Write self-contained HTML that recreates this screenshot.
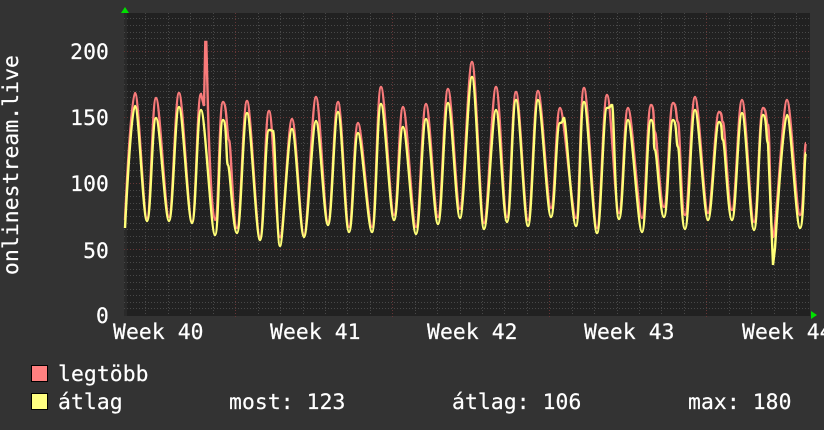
<!DOCTYPE html>
<html><head><meta charset="utf-8"><style>
html,body{margin:0;padding:0;background:#333;width:824px;height:430px;overflow:hidden}
svg{display:block}
text{font-family:"DejaVu Sans Mono","Liberation Mono",monospace;font-size:21.33px;letter-spacing:.1px;fill:#fff;stroke:#fff;stroke-width:.2px}
</style></head><body>
<svg width="824" height="430" viewBox="0 0 824 430" xmlns="http://www.w3.org/2000/svg">
<rect width="824" height="430" fill="#333"/>
<rect x="124" y="13" width="686" height="303" fill="#212121"/>
<rect x="124" y="13" width="3" height="303" fill="#2a2a2a"/>
<path fill="none" stroke="#484848" stroke-width="1" stroke-dasharray="1 2" d="M124 18.5H810M124 25.5H810M124 32.5H810M124 38.5H810M124 45.5H810M124 58.5H810M124 64.5H810M124 71.5H810M124 78.5H810M124 84.5H810M124 91.5H810M124 97.5H810M124 104.5H810M124 110.5H810M124 124.5H810M124 130.5H810M124 137.5H810M124 143.5H810M124 150.5H810M124 157.5H810M124 163.5H810M124 170.5H810M124 176.5H810M124 190.5H810M124 196.5H810M124 203.5H810M124 209.5H810M124 216.5H810M124 223.5H810M124 229.5H810M124 236.5H810M124 242.5H810M124 256.5H810M124 262.5H810M124 269.5H810M124 275.5H810M124 282.5H810M124 289.5H810M124 295.5H810M124 302.5H810M124 308.5H810"/>
<path fill="none" stroke="#484848" stroke-width="1" stroke-dasharray="1 2" d="M145.5 13V316M168.5 13V316M190.5 13V316M213.5 13V316M258.5 13V316M280.5 13V316M303.5 13V316M325.5 13V316M347.5 13V316M370.5 13V316M415.5 13V316M437.5 13V316M460.5 13V316M482.5 13V316M504.5 13V316M527.5 13V316M572.5 13V316M594.5 13V316M617.5 13V316M639.5 13V316M661.5 13V316M684.5 13V316M729.5 13V316M751.5 13V316M774.5 13V316M796.5 13V316"/>
<path fill="none" stroke="#663636" stroke-width="1" stroke-dasharray="1 2" d="M124 51.5H810M124 117.5H810M124 183.5H810M124 249.5H810M235.5 13V318M392.5 13V318M549.5 13V318M706.5 13V318"/>
<path fill="none" stroke="#f87a7a" stroke-width="2.4" stroke-linejoin="miter" d="M125 220 S131 93 135 93 S143 218 147 218 S152 98 156 98 S165 217 169 217 S175 93 179 93 S188 222 192 222 S197 94 201 94 L204 106 L205.300 42 L206.300 42 L208 110 S211 220 215 220 S219 102 223 102 S227 140 229 140 S233 228 237 228 S243 101 247 101 S256 237 260 237 S265 111 269 111 S276 237 280 237 S288 119 292 119 S300 235 304 235 S312 97 316 97 S324 222 328 222 S334 102 338 102 S345 227 349 227 S354 123 358 123 S368 227 372 227 S377 87 381 87 S390 215 394 215 S399 107 403 107 S412 227 416 227 S422 104 426 104 S434 217 438 217 S444 89 448 89 S456 209 460 209 S468 62 472 62 S480 223 484 223 S492 87 496 87 S503 217 507 217 S512 92 516 92 S524 220 528 220 S534 91 538 91 S547 208 551 208 S556 108 560 108 S572 218 576 218 S580 88 584 88 S593 228 597 228 S603 95 607 95 S615 213 619 213 S624 108 628 108 S638 218 642 218 S647 105 651 105 S653 132 655 132 S660 207 664 207 S669 103 673 103 S676 122 678 122 S681 215 685 215 S691 97 695 97 S704 213 708 213 S715 112 719 112 S721 122 723 122 S728 210 732 210 S738 100 742 100 S750 222 754 222 S759 108 763 108 S766 125 768 125 S770 237 773 237 S783 100 787 100 S796 215 800 215 S804 143 806 143"/>
<path fill="none" stroke="#ffff78" stroke-width="2.4" stroke-linejoin="miter" d="M125 228 S131 106 135 106 S143 221 147 221 S152 118 156 118 S165 221 169 221 S175 107 179 107 S188 223 192 223 S197 110 201 110 S211 235 215 235 S219 120 223 120 S226 165 228 165 S233 233 237 233 S243 113 247 113 S256 240 260 240 S265 130 269 130 S271 131 273 131 S277 246 280 246 S288 129 292 129 S300 237 304 237 S312 121 316 121 S324 225 328 225 S334 112 338 112 S345 232 349 232 S354 133 358 133 S368 232 372 232 S377 104 381 104 S390 220 394 220 S399 127 403 127 S412 234 416 234 S422 119 426 119 S434 224 438 224 S444 103 448 103 S456 218 460 218 S468 77 472 77 S480 229 484 229 S492 110 496 110 S503 222 507 222 S512 100 516 100 S524 226 528 226 S534 100 538 100 S547 217 551 217 S556 123 560 123 S562 118 564 118 S572 226 576 226 S580 102 584 102 S593 233 597 233 S603 108 607 108 S610 105 612 105 S615 219 619 219 S624 120 628 120 S638 232 642 232 S647 120 651 120 S653 150 655 150 S660 217 664 217 S669 120 673 120 S676 147 678 147 S681 229 685 229 S691 110 695 110 S704 220 708 220 S715 122 719 122 S721 140 723 140 S728 220 732 220 S738 113 742 113 S750 230 754 230 S759 115 763 115 S766 143 768 143 L773 265 L775 248 S783 115 787 115 S796 228 800 228 S804 153 806 153"/>
<polygon points="125,7 121,13 129,13" fill="#00e000"/>
<polygon points="811,311 811,319 817,315" fill="#00e000"/>
<text x="109" y="59" text-anchor="end">200</text>
<text x="109" y="125" text-anchor="end">150</text>
<text x="109" y="191" text-anchor="end">100</text>
<text x="109" y="258" text-anchor="end">50</text>
<text x="109" y="323" text-anchor="end">0</text>
<text transform="translate(18,275) rotate(-90)">onlinestream.live</text>
<text x="113" y="339">Week 40</text>
<text x="270" y="339">Week 41</text>
<text x="427" y="339">Week 42</text>
<text x="584" y="339">Week 43</text>
<text x="742" y="339">Week 44</text>
<rect x="31.500" y="365.500" width="16" height="16" fill="#ff8080" stroke="#000"/>
<rect x="31.500" y="393.500" width="16" height="16" fill="#ffff80" stroke="#000"/>
<text x="58" y="381">legtöbb</text>
<text x="58" y="409">átlag</text>
<text x="229" y="409">most: 123</text>
<text x="452" y="409">átlag: 106</text>
<text x="688" y="409">max: 180</text>
</svg>
</body></html>
